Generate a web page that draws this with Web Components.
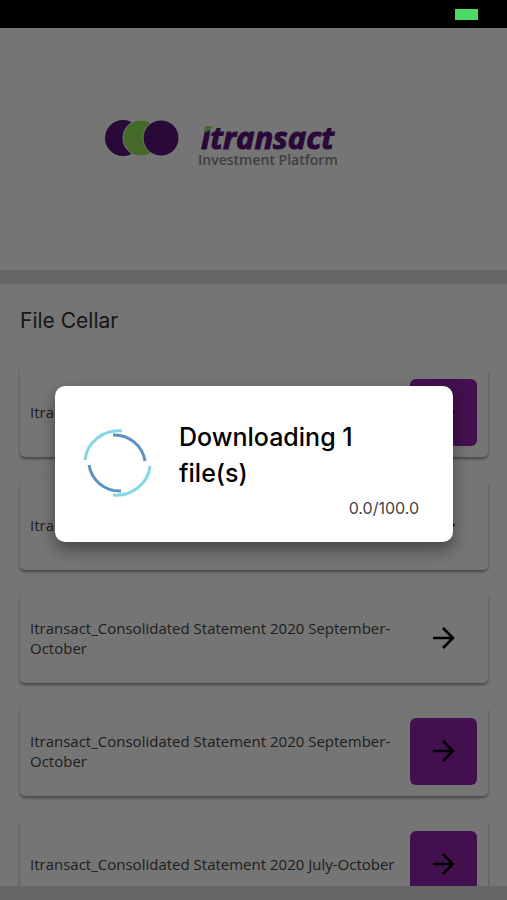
<!DOCTYPE html>
<html lang="en">
<head>
<meta charset="utf-8">
<meta name="viewport" content="width=device-width, initial-scale=1">
<title>File Cellar</title>
<style>
  body {
    margin: 0;
    font-family: Inter, "Open Sans", sans-serif;
    color: #444;
  }
</style>
</head>
<body>
<file-app>
  <status-bar slot="status"></status-bar>
  <brand-header slot="header"></brand-header>
  <file-list slot="content" heading="File Cellar">
    <file-card active>Itransact_Consolidated Statement 2020</file-card>
    <file-card>Itransact_Consolidated Statement 2020</file-card>
    <file-card>Itransact_Consolidated Statement 2020 September-October</file-card>
    <file-card active>Itransact_Consolidated Statement 2020 September-October</file-card>
    <file-card active>Itransact_Consolidated Statement 2020 July-October</file-card>
  </file-list>
  <download-dialog slot="dialog" progress="0.0/100.0">Downloading 1 file(s)</download-dialog>
</file-app>

<script>
class FileApp extends HTMLElement {
  constructor() {
    super();
    this.attachShadow({ mode: 'open' });
    this.shadowRoot.innerHTML = `
      <style>
        :host {
          display: flex;
          flex-direction: column;
          height: 100vh;
          overflow: hidden;
        }

        .screen {
          position: relative;
          flex: 1;
          min-height: 0;
          display: flex;
          flex-direction: column;
          background: #fff;
        }

        main {
          flex: 1;
          min-height: 0;
          overflow: hidden;
          border-top: 14px solid #dedede;
          border-bottom: 14px solid #dedede;
        }

        /* The backdrop dims the screen but not the status bar */
        .backdrop {
          position: absolute;
          inset: 0;
          display: flex;
          align-items: center;
          justify-content: center;
          padding: 0 54px 0 55px;
          background: rgba(0, 0, 0, 0.54);
        }
      </style>
      <slot name="status"></slot>
      <div class="screen">
        <slot name="header"></slot>
        <main><slot name="content"></slot></main>
        <div class="backdrop"><slot name="dialog"></slot></div>
      </div>
    `;
  }
}

class StatusBar extends HTMLElement {
  constructor() {
    super();
    this.attachShadow({ mode: 'open' });
    this.shadowRoot.innerHTML = `
      <style>
        :host {
          display: flex;
          align-items: center;
          justify-content: flex-end;
          box-sizing: border-box;
          height: 28px;
          padding: 0 29px;
          background: #000;
        }

        .battery {
          width: 23px;
          height: 11px;
          background: #4cd964;
        }
      </style>
      <div class="battery"></div>
    `;
  }
}

class BrandHeader extends HTMLElement {
  constructor() {
    super();
    this.attachShadow({ mode: 'open' });
    this.shadowRoot.innerHTML = `
      <style>
        :host {
          display: flex;
          justify-content: center;
          box-sizing: border-box;
          height: 242px;
          padding: 84px 67px 0 0;
        }

        svg {
          width: 240px;
          height: 64px;
        }

        .name {
          font: italic 700 31px "Open Sans", sans-serif;
          fill: #5a1478;
          stroke: #5a1478;
        }

        .tagline {
          font: 600 14px "Open Sans", sans-serif;
          fill: #8a8a8a;
        }
      </style>
      <svg viewBox="0 0 240 64" role="img" aria-label="itransact Investment Platform">
        <circle cx="23" cy="26" r="18" fill="#5a1478"/>
        <circle cx="41" cy="26" r="18" fill="#92e855" stroke="#fff"/>
        <circle cx="61" cy="26" r="18" fill="#5a1478" stroke="#fff"/>
        <text class="name" x="101" y="37">itransact</text>
        <path d="M102 8h12v10h-12z" fill="#fff"/>
        <path d="M105 14h8l-2 3-7 3z" fill="#92e855"/>
        <text class="tagline" x="98" y="53">Investment Platform</text>
      </svg>
    `;
  }
}

class FileList extends HTMLElement {
  constructor() {
    super();
    this.attachShadow({ mode: 'open' });
  }

  connectedCallback() {
    this.shadowRoot.innerHTML = `
      <style>
        :host {
          display: block;
          padding: 21px 19px 0 20px;
        }

        h1 {
          margin: 0 0 30px;
          font-size: 21px;
          line-height: 32px;
          font-weight: 400;
          color: #333;
        }

        .cards {
          display: flex;
          flex-direction: column;
          gap: 23px;
        }
      </style>
      <h1>${this.getAttribute('heading')}</h1>
      <div class="cards"><slot></slot></div>
    `;
  }
}

class FileCard extends HTMLElement {
  constructor() {
    super();
    this.attachShadow({ mode: 'open' });
    this.shadowRoot.innerHTML = `
      <style>
        :host {
          display: flex;
          align-items: center;
          gap: 12px;
          box-sizing: border-box;
          min-height: 90px;
          padding: 11px 11px 11px 10px;
          border-radius: 5px;
          background: #fff;
          box-shadow: 0 2px 3px rgba(0, 0, 0, 0.4);
        }

        .name {
          flex: 1;
          font-family: "Open Sans", sans-serif;
          font-size: 15px;
          line-height: 20px;
        }

        button {
          display: flex;
          align-items: center;
          justify-content: center;
          width: 67px;
          height: 67px;
          padding: 0;
          border: 0;
          border-radius: 6px;
          background: transparent;
          color: #000;
        }

        :host([active]) button {
          background: #9223ac;
        }

        svg {
          width: 24px;
          height: 24px;
        }
      </style>
      <div class="name" id="name"><slot></slot></div>
      <button type="button" aria-labelledby="name">
        <svg viewBox="0 0 24 24" fill="none" stroke="currentColor" stroke-width="2.600">
          <path d="M1 12H21M11 2l10 10-10 10"/>
        </svg>
      </button>
    `;
  }
}

class DownloadDialog extends HTMLElement {
  constructor() {
    super();
    this.attachShadow({ mode: 'open' });
  }

  connectedCallback() {
    this.shadowRoot.innerHTML = `
      <style>
        :host {
          display: block;
          flex: 1;
        }

        .dialog {
          display: flex;
          align-items: center;
          gap: 26px;
          box-sizing: border-box;
          min-height: 156px;
          padding: 20px 34px 20px 28px;
          border-radius: 10px;
          background: #fff;
          box-shadow: 0 8px 16px rgba(0, 0, 0, 0.4);
        }

        .spinner {
          flex: none;
          width: 70px;
          height: 70px;
        }

        .body {
          flex: 1;
          padding-top: 12px;
        }

        h2 {
          margin: 0 0 4px;
          max-width: 200px;
          font-size: 25px;
          line-height: 36px;
          font-weight: 500;
          color: #000;
        }

        .progress {
          text-align: right;
          font-size: 16px;
          line-height: 26px;
        }
      </style>
      <div class="dialog" role="dialog" aria-labelledby="title">
        <svg class="spinner" viewBox="0 0 70 70" fill="none" stroke-width="3">
          <path d="M2 31A34 32 0 0 1 39 2M67 37A34 32 0 0 1 30 66" stroke="#85d7e4"/>
          <path d="M30 6A31 31 0 0 1 62 32M6 36A31 31 0 0 0 38 62" stroke="#5b92c3"/>
        </svg>
        <div class="body">
          <h2 id="title"><slot></slot></h2>
          <div class="progress">${this.getAttribute('progress')}</div>
        </div>
      </div>
    `;
  }
}

customElements.define('file-app', FileApp);
customElements.define('status-bar', StatusBar);
customElements.define('brand-header', BrandHeader);
customElements.define('file-list', FileList);
customElements.define('file-card', FileCard);
customElements.define('download-dialog', DownloadDialog);
</script>
</body>
</html>
